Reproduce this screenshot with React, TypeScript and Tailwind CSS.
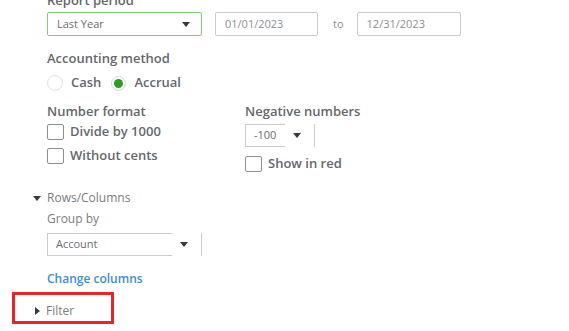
const font = { fontFamily: '"Open Sans", "Liberation Sans", sans-serif' }

function Caret() {
  return (
    <svg width="8" height="5" viewBox="0 0 8 5" className="shrink-0">
      <path d="M0 0h8L4 5z" fill="#393a3d" />
    </svg>
  )
}

function Check({ label }: { label: string }) {
  return (
    <div className="flex h-4 items-center gap-[6px]">
      <span className="h-[16px] w-[17px] rounded-[2px] border border-[#8d9096] bg-white" />
      <span className="text-[13px] font-semibold text-[#65676c]">{label}</span>
    </div>
  )
}

function Radio({ label, checked }: { label: string; checked?: boolean }) {
  return (
    <div className="flex items-center gap-[8px]">
      <span
        className={
          checked
            ? 'flex h-[15px] w-[15px] items-center justify-center rounded-full border border-[#d4d6d9] bg-white'
            : 'h-[16px] w-[16px] rounded-full border border-[#e0e1e3] bg-white'
        }
      >
        {checked && <span className="h-[9px] w-[9px] rounded-full bg-[#2ca01c]" />}
      </span>
      <span className="text-[13px] font-semibold text-[#65676c]">{label}</span>
    </div>
  )
}

function SplitSelect({ value, w, h }: { value: string; w: string; h: string }) {
  return (
    <div className={`flex items-center ${h}`}>
      <div className={`flex h-full items-center border-y border-l border-[#c9cbce] pl-[8px] text-[11px] text-[#6b6c72] ${w}`}>
        {value}
      </div>
      <div className="flex h-full items-center gap-[13px] pl-[8px]">
        <Caret />
        <span className="h-full w-px bg-[#c9cbce]" />
      </div>
    </div>
  )
}

export default function App() {
  return (
    <div className="h-[331px] w-[569px] overflow-hidden bg-white" style={font}>
      <div className="-mt-[8px] flex flex-col pl-[47px]">
        <div className="h-4 text-[13px] leading-4 font-semibold text-[#65676c]">Report period</div>

        <div className="mt-[4px] flex h-6 items-center">
          <div className="flex h-full w-[155px] items-center justify-between rounded-[2px] border border-[#7fcf72] pr-[11px] pl-[9px] text-[11px] text-[#6b6c72]">
            <span>Last Year</span>
            <Caret />
          </div>
          <div className="ml-[13px] flex h-full w-[103px] items-center rounded-[2px] border border-[#c9cbce] pl-[9px] text-[11px] text-[#8d9096]">
            01/01/2023
          </div>
          <span className="ml-[15px] text-[11px] text-[#8d9096]">to</span>
          <div className="ml-[13px] flex h-full w-[104px] items-center rounded-[2px] border border-[#c9cbce] pl-[9px] text-[11px] text-[#8d9096]">
            12/31/2023
          </div>
        </div>

        <div className="mt-[14px] h-4 text-[13px] leading-4 font-semibold text-[#65676c]">Accounting method</div>
        <div className="mt-[9px] flex h-4 items-center gap-[10px]">
          <Radio label="Cash" />
          <Radio label="Accrual" checked />
        </div>

        <div className="mt-[12px] flex">
          <div className="flex w-[198px] flex-col">
            <div className="h-4 text-[13px] leading-4 font-semibold text-[#65676c]">Number format</div>
            <div className="mt-[5px] flex flex-col gap-[8px]">
              <Check label="Divide by 1000" />
              <Check label="Without cents" />
            </div>
          </div>
          <div className="flex flex-col">
            <div className="h-4 text-[13px] leading-4 font-semibold text-[#65676c]">Negative numbers</div>
            <div className="mt-[5px]">
              <SplitSelect value="-100" w="w-[40px]" h="h-[23px]" />
            </div>
            <div className="mt-[9px]">
              <Check label="Show in red" />
            </div>
          </div>
        </div>

        <div className="mt-[18px] -ml-[14px] flex h-4 items-center gap-[6px]">
          <Caret />
          <span className="text-[12px] text-[#7a7c81]">Rows/Columns</span>
        </div>
        <div className="mt-[5px] h-4 text-[12px] leading-4 text-[#7a7c81]">Group by</div>
        <div className="mt-[6px]">
          <SplitSelect value="Account" w="w-[125px]" h="h-[23px]" />
        </div>
        <div className="mt-[15px] h-4 text-[12px] leading-4 font-semibold text-[#3a8fd6]">Change columns</div>

        <div className="mt-[5px] -ml-[35px] flex h-[32px] w-[102px] items-end border-[3px] border-[#e8242a] pb-[2px] pl-[20px]">
          <div className="flex h-4 items-center gap-[6px]">
            <svg width="5" height="8" viewBox="0 0 5 8" className="shrink-0">
              <path d="M0 0l5 4-5 4z" fill="#393a3d" />
            </svg>
            <span className="text-[12px] text-[#7a7c81]">Filter</span>
          </div>
        </div>

        <div className="mt-[7px] -ml-[14px] flex h-4 items-center gap-[6px] opacity-30">
          <svg width="5" height="8" viewBox="0 0 5 8" className="shrink-0">
            <path d="M0 0l5 4-5 4z" fill="#393a3d" />
          </svg>
          <span className="text-[12px] text-[#6b6c72]">Header/Footer</span>
        </div>
      </div>
    </div>
  )
}
